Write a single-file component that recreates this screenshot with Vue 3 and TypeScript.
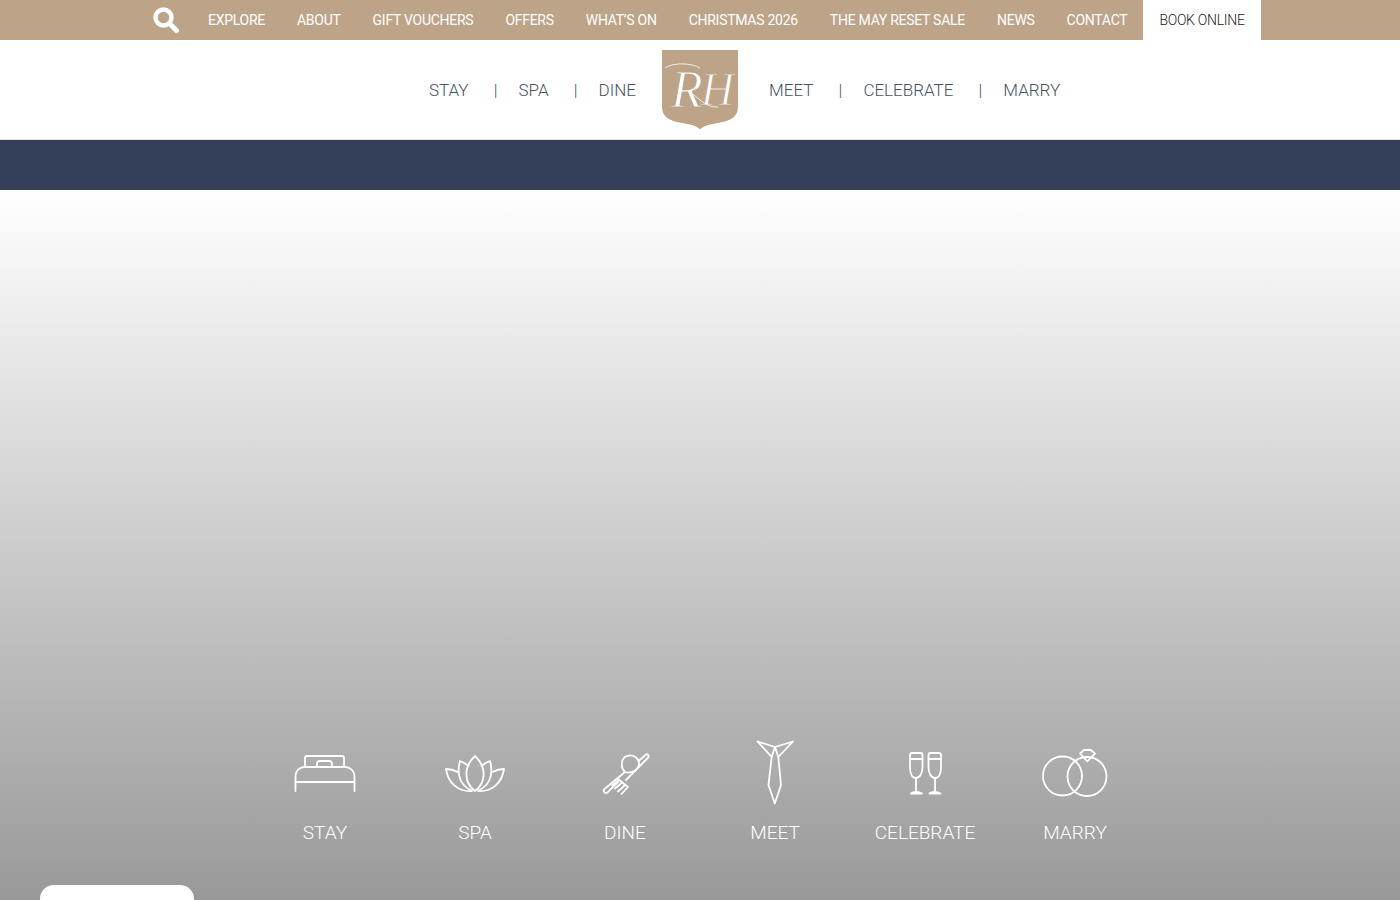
<template>
  <div class="page">
    <div class="top-bar">
      <svg class="search" viewBox="0 0 26 26" width="26" height="26">
        <circle cx="10.5" cy="10.5" r="8" fill="none" stroke="#fff" stroke-width="4.4" />
        <path d="M16.5 16.5 23.5 23.5" stroke="#fff" stroke-width="5" stroke-linecap="round" />
      </svg>
      <nav class="top-links">
        <a v-for="link in topLinks" :key="link">{{ link }}</a>
      </nav>
      <a class="book">BOOK ONLINE</a>
    </div>

    <header class="main-nav">
      <nav class="side left">
        <template v-for="(item, i) in leftNav" :key="item">
          <span v-if="i > 0" class="sep">|</span>
          <a>{{ item }}</a>
        </template>
      </nav>
      <svg class="logo" viewBox="0 0 76 80" width="76" height="80">
        <path d="M0 0H76V56C76 68 68 71 53 73.500C46 74.700 41 76 38 79.500C35 76 30 74.700 23 73.500C8 71 0 68 0 56Z" fill="#bda388" />
        <text x="9" y="57" class="mono"><tspan class="r">R</tspan><tspan class="h" dx="-2" dy="-2">H</tspan></text>
        <path d="M3 18C12 12 30 13 38 18" fill="none" stroke="#fff" stroke-width="0.8" />
        <path d="M31 44C38 50 46 58 56 57" fill="none" stroke="#fff" stroke-width="0.8" />
      </svg>
      <nav class="side right">
        <template v-for="(item, i) in rightNav" :key="item">
          <span v-if="i > 0" class="sep">|</span>
          <a>{{ item }}</a>
        </template>
      </nav>
    </header>

    <div class="band"></div>

    <main class="hero">
      <div class="features">
        <a class="feature">
          <svg viewBox="0 0 80 70" width="80" height="70">
            <path d="M20 30V21a2 2 0 0 1 2-2H57a2 2 0 0 1 2 2V30" />
            <path d="M32 30v-3a3 3 0 0 1 3-3H44a3 3 0 0 1 3 3v3" />
            <path d="M10.500 54V39c0-5 4-9 9-9H60c5 0 9.500 4 9.500 9V54" />
            <path d="M10.500 45H69.500" />
          </svg>
          <span>STAY</span>
        </a>
        <a class="feature">
          <svg viewBox="0 0 80 70" width="80" height="70">
            <path d="M40 54C29 46 28 30 40 19C52 30 51 46 40 54Z" />
            <path d="M36 53C26 49 21 38 25 24C28 25 31 27 33.500 29" />
            <path d="M44 53C54 49 59 38 55 24C52 25 49 27 46.500 29" />
            <path d="M37 54C23 55 13 46 11 32C15 32 19 33 22.500 35" />
            <path d="M43 54C57 55 67 46 69 32C65 32 61 33 57.500 35" />
          </svg>
          <span>SPA</span>
        </a>
        <a class="feature">
          <svg viewBox="0 0 80 70" width="80" height="70">
            <path d="M40 35C35 30 36 21 42 19C48 17 54 21 54 27C54 33 46 37 40 35Z" />
            <path d="M40 35 19.500 52a2.200 2.200 0 0 0 3 3.300L33 45" />
            <path d="M53.500 24 60.500 18a1.800 1.800 0 0 1 2.700 2.500L41 43" />
            <path d="M33 42 43 50M34 43 27 48.500M37 45.500 30 51.500M40 48 33 54.500M43 50 36.500 57" />
          </svg>
          <span>DINE</span>
        </a>
        <a class="feature">
          <svg viewBox="0 0 80 70" width="80" height="70">
            <path d="M22.500 4.500 36.700 20 40 10Z" />
            <path d="M58 4.500 43.300 20 40 10Z" />
            <path d="M36.700 20 33.500 48 39.800 66.500 46 48 43.300 20" />
          </svg>
          <span>MEET</span>
        </a>
        <a class="feature">
          <svg viewBox="0 0 80 70" width="80" height="70">
            <g transform="translate(0 1)">
              <path d="M25 17a2 2 0 0 1 2-2H35.500a2 2 0 0 1 2 2V29C37.500 35 35 40 31 40C27 40 25 35 25 29Z" />
              <path d="M25 21H37.500M31 40V54" />
              <path d="M26 55.500C28 53.500 34 53.500 37 55.500Z" fill="#fff" />
              <path d="M43.500 17a2 2 0 0 1 2-2H54a2 2 0 0 1 2 2V29C56 35 54 40 50 40C46 40 43.500 35 43.500 29Z" />
              <path d="M43.500 21H56M50 40V54" />
              <path d="M44.500 55.500C46.500 53.500 52.500 53.500 55.500 55.500Z" fill="#fff" />
            </g>
          </svg>
          <span>CELEBRATE</span>
        </a>
        <a class="feature">
          <svg viewBox="0 0 80 70" width="80" height="70">
            <circle cx="27.500" cy="39" r="19.500" />
            <circle cx="52" cy="39.500" r="19.500" />
            <path d="M45 16.500 49 13H55.700L60 16.500 52.300 24.300Z" />
          </svg>
          <span>MARRY</span>
        </a>
      </div>
    </main>

    <div class="widget"></div>
  </div>
</template>

<script setup lang="ts">
const topLinks: string[] = [
  'EXPLORE',
  'ABOUT',
  'GIFT VOUCHERS',
  'OFFERS',
  'WHAT’S ON',
  'CHRISTMAS 2026',
  'THE MAY RESET SALE',
  'NEWS',
  'CONTACT',
]
const leftNav: string[] = ['STAY', 'SPA', 'DINE']
const rightNav: string[] = ['MEET', 'CELEBRATE', 'MARRY']
</script>

<style>
html,
body {
  margin: 0;
  overflow: hidden;
}
</style>

<style scoped>
.page {
  position: relative;
  height: 900px;
  display: flex;
  flex-direction: column;
  overflow: hidden;
  font-family: Roboto, "Liberation Sans", sans-serif;
  background: #fff;
}

.top-bar {
  flex: 0 0 40px;
  display: flex;
  align-items: center;
  padding-left: 153px;
  background: #bda388;
}

.search {
  flex: none;
  margin-right: 29px;
}

.top-links {
  display: flex;
  gap: 32px;
  font-size: 14px;
  letter-spacing: -0.27px;
  color: #fff;
}

.book {
  align-self: stretch;
  display: flex;
  align-items: center;
  margin-left: 16px;
  padding: 0 16px;
  background: #fff;
  color: #222;
  font-size: 14px;
  font-weight: 300;
  letter-spacing: -0.28px;
}

.main-nav {
  flex: 0 0 100px;
  box-sizing: border-box;
  display: grid;
  grid-template-columns: 1fr 76px 1fr;
  align-items: center;
  border-bottom: 1px solid #e4e4e4;
}

.logo {
  align-self: start;
  margin-top: 10px;
}

.side {
  display: flex;
  align-items: center;
  gap: 22px;
  font-size: 17px;
  font-weight: 300;
  color: #46525e;
}

.left {
  justify-content: flex-end;
  padding-right: 26px;
}

.right {
  padding-left: 31px;
}

.sep {
  width: 6px;
  margin: 0 -2px 0 2px;
  text-align: center;
  font-size: 17px;
}

.mono {
  font-family: "Liberation Serif", serif;
  font-style: italic;
  fill: #fff;
  stroke: #bda388;
  stroke-width: 1.1px;
}

.r {
  font-size: 52px;
}

.h {
  font-size: 46px;
}

.band {
  flex: 0 0 50px;
  background: #34405a;
}

.hero {
  flex: 1;
  display: flex;
  flex-direction: column;
  justify-content: flex-end;
  align-items: center;
  padding-bottom: 56px;
  background: linear-gradient(to bottom, #fff, #999);
}

.features {
  display: flex;
}

.feature {
  width: 150px;
  display: flex;
  flex-direction: column;
  align-items: center;
  gap: 14px;
  color: #fff;
  font-size: 19px;
  font-weight: 300;
}

.feature svg {
  fill: none;
  stroke: #fff;
  stroke-width: 1.800;
  stroke-linejoin: round;
  stroke-linecap: round;
}

.widget {
  position: absolute;
  left: 40px;
  bottom: 0;
  width: 154px;
  height: 15px;
  border-radius: 14px 14px 0 0;
  background: #fff;
}
</style>
